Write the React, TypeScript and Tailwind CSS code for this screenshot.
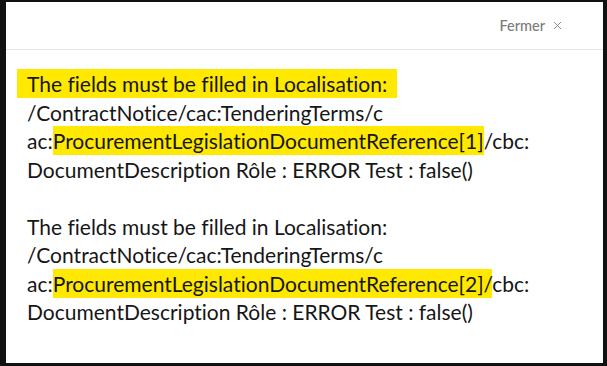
import { X } from 'lucide-react'

const HL = 'bg-[#ffe900]'

function Message({ index, highlightTitle }: { index: number; highlightTitle: boolean }) {
  return (
    <div className="leading-[28.5px]">
      <div className="whitespace-nowrap">
        {highlightTitle ? (
          <span className={`${HL} -ml-[10px] pl-[10px] pr-[10px] py-[2px]`}>
            The fields must be filled in Localisation:
          </span>
        ) : (
          'The fields must be filled in Localisation:'
        )}
      </div>
      <div className="whitespace-nowrap">/ContractNotice/cac:TenderingTerms/c</div>
      <div className="whitespace-nowrap">
        ac:
        {index === 1 ? (
          <>
            <span className={`${HL} py-[2px]`}>ProcurementLegislationDocumentReference[1]</span>/cbc:
          </>
        ) : (
          <>
            <span className={`${HL} py-[2px]`}>ProcurementLegislationDocumentReference[2]/</span>cbc:
          </>
        )}
      </div>
      <div className="whitespace-nowrap">DocumentDescription Rôle : ERROR Test : false()</div>
    </div>
  )
}

export default function App() {
  return (
    <div
      className="w-[607px] h-[366px] bg-white border-t-2 border-l-[6px] border-r-4 border-b-[3px] border-[#111] overflow-hidden [font-variant-ligatures:none]"
      style={{ fontFamily: 'Lato, "Noto Sans", sans-serif' }}
    >
      {/* Header */}
      <div className="h-[48px] flex items-center justify-end pr-[39px] border-b border-[#e3e6ea]">
        <button className="flex items-center gap-[6px] text-[14.5px] font-medium text-[#7a7a7a]">
          Fermer <X className="h-[13px] w-[13px]" strokeWidth={1.6} />
        </button>
      </div>

      {/* Body */}
      <div className="pl-[21px] pt-[20px] text-[21px] text-[#161616] flex flex-col gap-[28.5px]">
        <Message index={1} highlightTitle />
        <Message index={2} highlightTitle={false} />
      </div>
    </div>
  )
}
